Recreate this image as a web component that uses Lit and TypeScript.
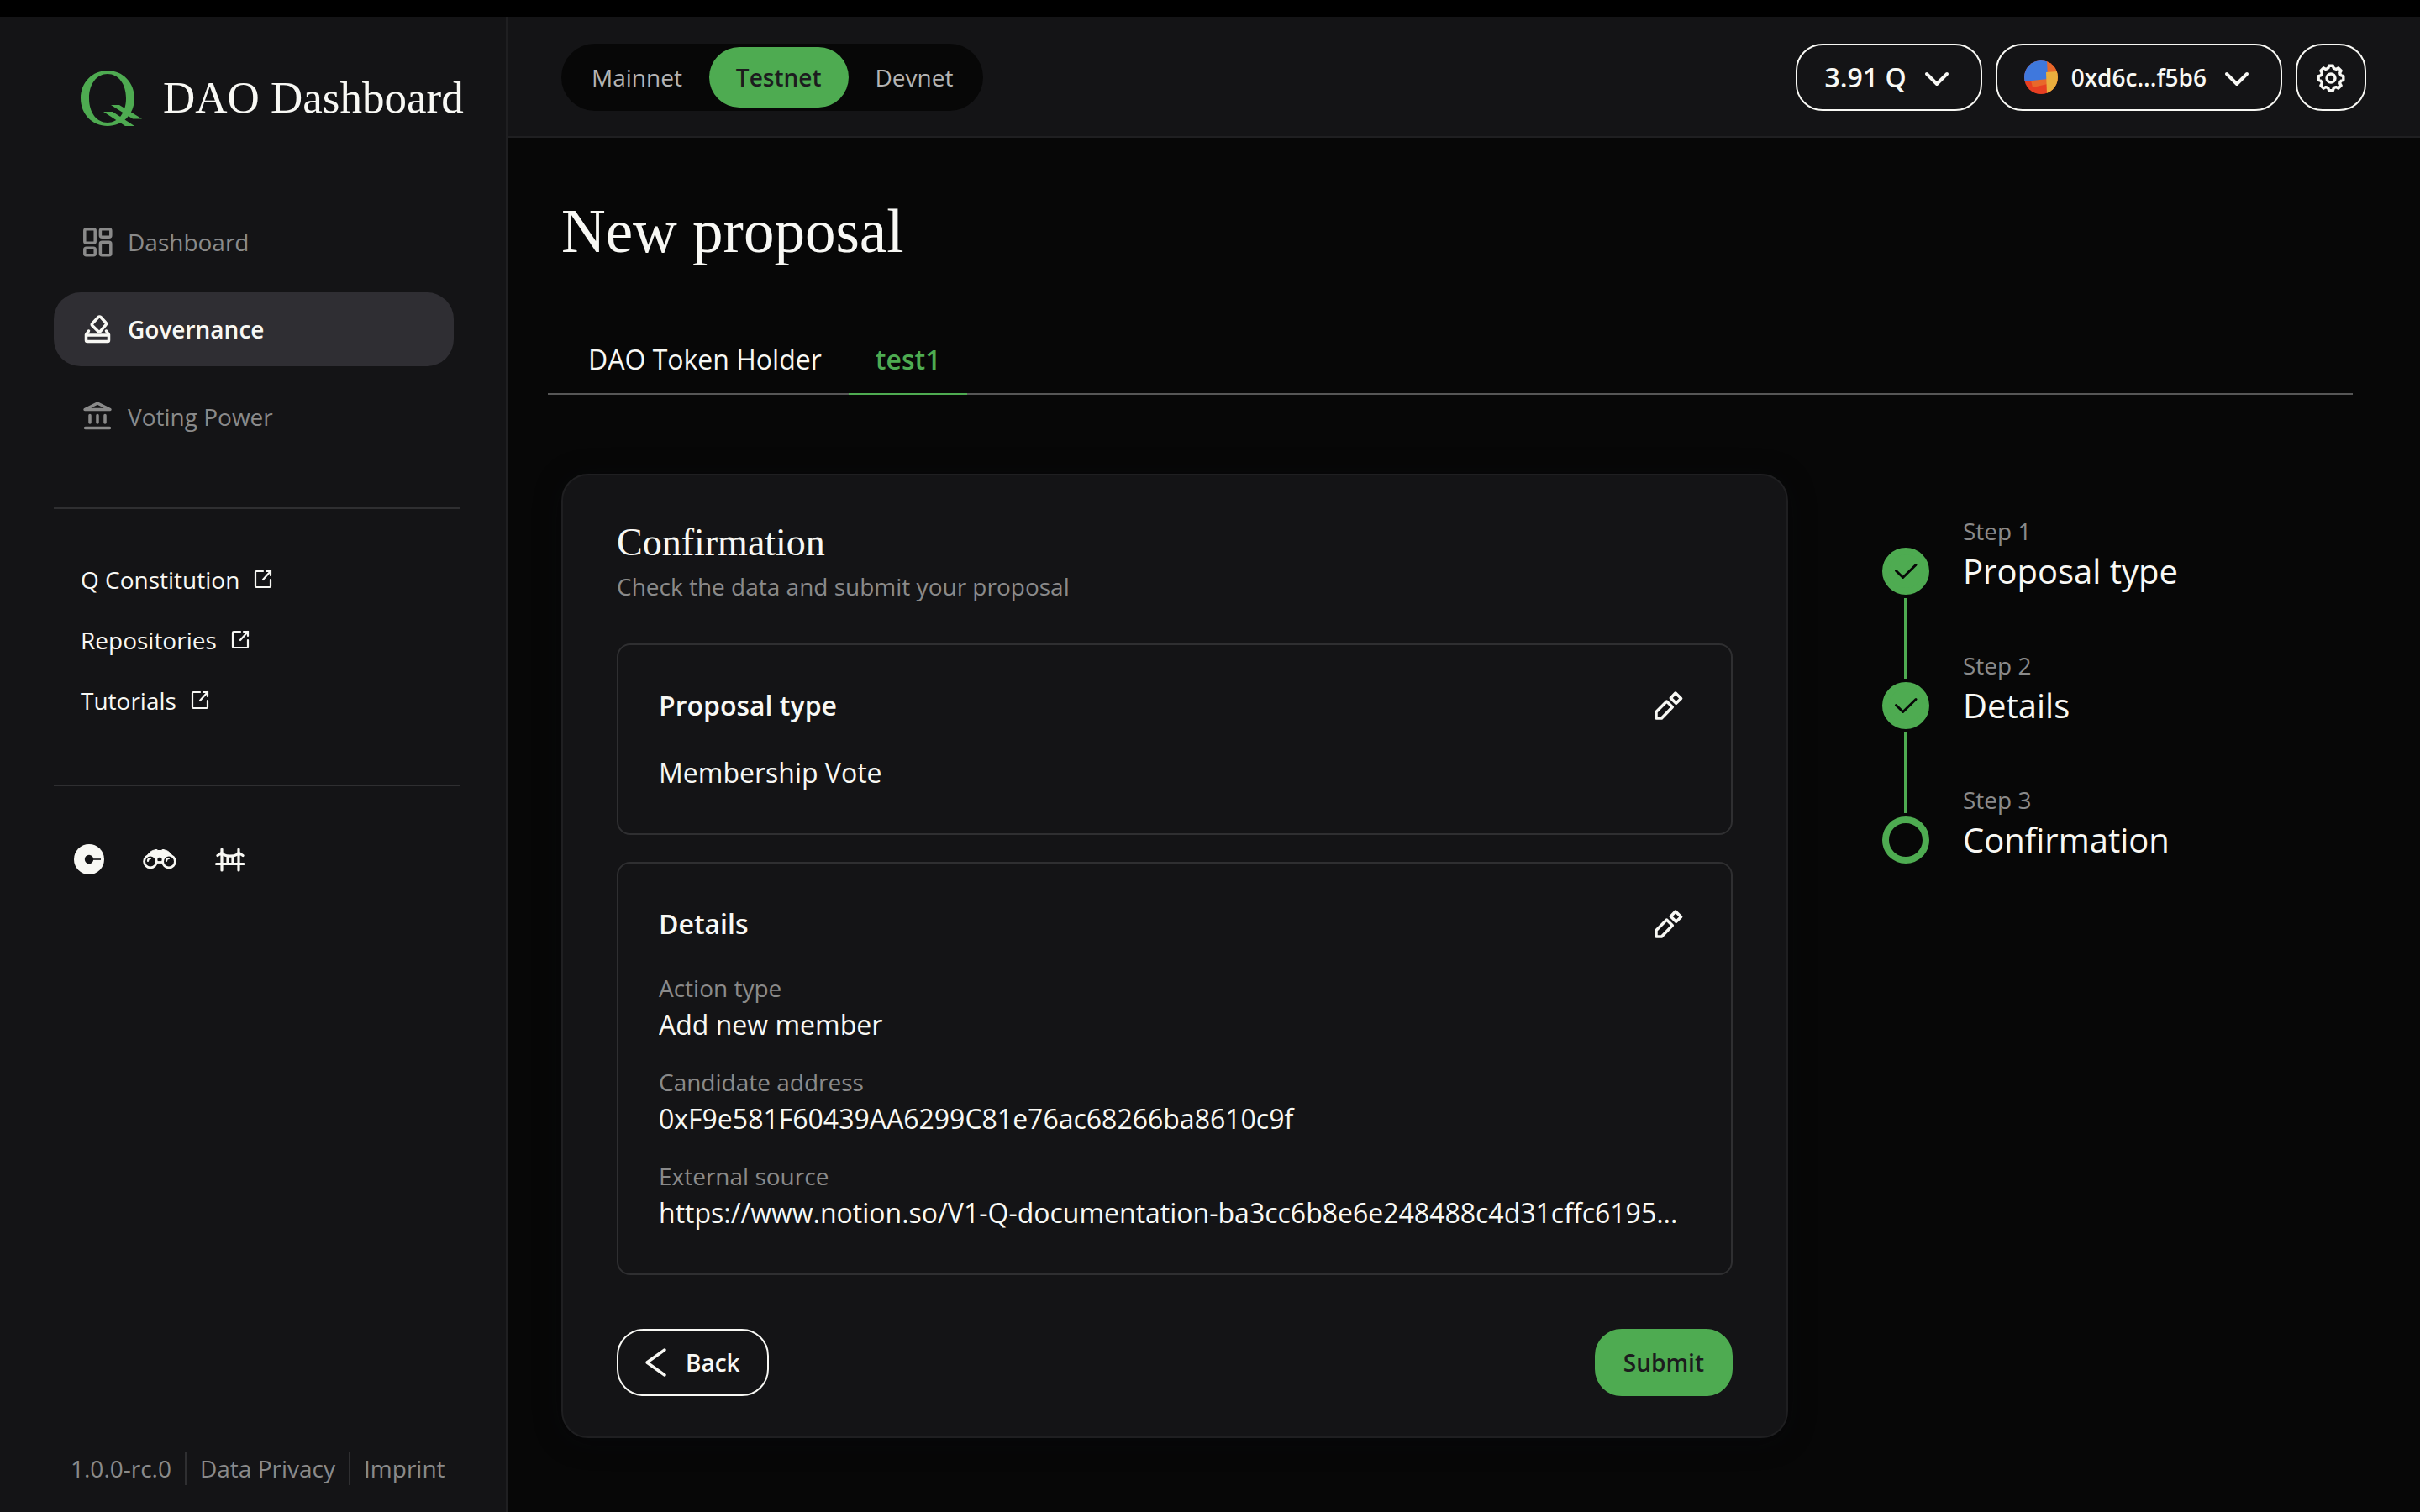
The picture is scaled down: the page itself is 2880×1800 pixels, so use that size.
import { LitElement, html, css, svg, nothing } from "lit";
import { customElement, property, state } from "lit/decorators.js";

const palette = css`
  :host {
    box-sizing: border-box;
    --page: #070707;
    --panel: #141416;
    --panel-line: #1f1f21;
    --line: #2f2f31;
    --selected: #2f2e33;
    --tab-line: #565656;
    --green: #4eab51;
    --text: #f8f8f4;
    --muted: #8a8a8a;
    --ink: #1c1c1e;
    --sans: "Open Sans", "Noto Sans", sans-serif;
    --serif: "Liberation Serif", "Times New Roman", serif;
  }
  * {
    box-sizing: border-box;
  }
  svg {
    display: block;
    flex: none;
  }
  a {
    color: inherit;
    text-decoration: none;
  }
  button {
    font: inherit;
    color: inherit;
    background: none;
    border: 0;
    padding: 0;
    margin: 0;
    cursor: pointer;
  }
  ul,
  ol,
  dl,
  dd,
  h1,
  h2,
  h3,
  p {
    margin: 0;
    padding: 0;
    list-style: none;
    font-weight: 400;
  }
`;

const stroke = (w: number, body: unknown, size = 40) => html`
  <svg width=${size} height=${size} viewBox="0 0 ${size} ${size}" fill="none" stroke="currentColor"
    stroke-width=${w} stroke-linecap="round" stroke-linejoin="round" aria-hidden="true">${body}</svg>`;

/* Outline of a cog with eight blunt teeth, centred on (cx, cy). */
const cog = (cx: number, cy: number) => {
  const at = (deg: number, r: number) => {
    const a = (deg * Math.PI) / 180;
    return `${(cx + r * Math.sin(a)).toFixed(2)} ${(cy - r * Math.cos(a)).toFixed(2)}`;
  };
  let d = "";
  for (let k = 0; k < 8; k++) {
    const c = k * 45;
    d += `${k ? "L" : "M"}${at(c - 9, 15)} L${at(c + 9, 15)} L${at(c + 14, 12.6)} Q${at(c + 22.5, 11.4)} ${at(c + 31, 12.6)} `;
  }
  return d + "Z";
};

const icons: Record<string, () => unknown> = {
  dashboard: () => stroke(3.5, svg`
    <rect x="4.800" y="4.800" width="12.400" height="16.400" rx="2"/>
    <rect x="23.400" y="4.800" width="12.400" height="9.400" rx="2"/>
    <rect x="4.800" y="27.300" width="12.400" height="8.400" rx="2"/>
    <rect x="23.400" y="20.300" width="12.400" height="15.400" rx="2"/>`),
  governance: () => stroke(3.5, svg`
    <path d="M21 5.500 a2 2 0 0 1 2.900 0 L29.800 12 a2 2 0 0 1 0 2.800 L23.500 22.300 a2 2 0 0 1 -2.900 0 L14 15.700 a2 2 0 0 1 0 -2.800 Z"/>
    <path d="M9.500 22 L6.500 26.500 V33 a1.500 1.500 0 0 0 1.500 1.500 H32 a1.500 1.500 0 0 0 1.500 -1.500 V26.500 L30.500 22"/>
    <path d="M7 27 H33"/>`),
  voting: () => stroke(3.5, svg`
    <path d="M5 11.500 L20 4 L35 11.500 Z"/>
    <path d="M11 18.500 V27 M20 18.500 V27 M29 18.500 V27"/>
    <path d="M5.500 33.500 H34.500"/>`),
  chevron: () => stroke(4, svg`<path d="M8 16 L20 28 L32 16"/>`),
  back: () => stroke(3.5, svg`<path d="M31 5 L10 20 L31 35" />`),
  gear: () => stroke(3.4, svg`<circle cx="20" cy="21" r="5"/><path d=${cog(20, 21)}/>`),
  pencil: () => stroke(3.5, svg`
    <path d="M5 35 V27.500 L17.500 15 L24.300 21.800 L11.500 35 Z"/>
    <path d="M22.300 11 L28 5 L34.600 11.500 L28.700 17.300 Z"/>`),
};

@customElement("dao-sidebar")
class DaoSidebar extends LitElement {
  static styles = [palette, css`
    :host {
      display: flex;
      flex-direction: column;
      background: var(--panel);
      border-right: 2px solid var(--panel-line);
      padding: 64px 54px 32px 64px;
      color: var(--text);
      font: 400 28px/40px var(--sans);
    }
    .brand {
      display: flex;
      gap: 24px;
      height: 68px;
      padding-left: 32px;
      font: 400 53px/64px var(--serif);
      white-space: nowrap;
    }
    .nav {
      display: grid;
      gap: 16px;
      margin: 92px 8px 64px 0;
    }
    .nav a {
      display: flex;
      align-items: center;
      gap: 16px;
      height: 88px;
      padding: 0 32px;
      border-radius: 32px;
      color: var(--muted);
    }
    .nav a.on {
      background: var(--selected);
      color: var(--text);
      font-weight: 600;
    }
    .links {
      display: grid;
      gap: 32px;
      border-top: 2px solid var(--line);
      border-bottom: 2px solid var(--line);
      padding: 64px 32px 80px;
    }
    .links a {
      display: flex;
      align-items: center;
      gap: 16px;
    }
    .social {
      display: flex;
      gap: 44px;
      padding: 68px 22px;
    }
    .foot {
      display: flex;
      margin-top: auto;
      padding-left: 20px;
      color: var(--muted);
    }
    .foot > * + * {
      border-left: 2px solid var(--line);
      margin-left: 16px;
      padding-left: 16px;
    }
  `];

  @state() items = [
    { icon: "dashboard", label: "Dashboard" },
    { icon: "governance", label: "Governance", on: true },
    { icon: "voting", label: "Voting Power" },
  ];

  render() {
    return html`
      <a class="brand" href="#">
        <svg width="74" height="68" viewBox="0 0 74 68" fill="#4eab51" aria-hidden="true">
          <path fill-rule="evenodd" d="M32 0 C50 0 64 14 64 33 C64 52 50 66 32 66 C14 66 0 52 0 33 C0 14 14 0 32 0 Z M32 4 C19 4 10 16 10 33 C10 50 19 62 32 62 C45 62 54 50 54 33 C54 16 45 4 32 4 Z"/>
          <path d="M36 41 H46 L73 57.500 H62 Z M27 49 H38 L64 66 H53 Z"/>
        </svg>
        <span>DAO Dashboard</span>
      </a>
      <nav class="nav">
        ${this.items.map((i) => html`<a href="#" class=${i.on ? "on" : ""}>${icons[i.icon]()}<span>${i.label}</span></a>`)}
      </nav>
      <div class="links">
        ${["Q Constitution", "Repositories", "Tutorials"].map((l) => html`
          <a href="#"><span>${l}</span>
            <svg width="26" height="26" viewBox="0 0 26 26" fill="none" stroke="currentColor" stroke-width="2.200" stroke-linecap="round" aria-hidden="true">
              <path d="M12 3 H4 a1 1 0 0 0 -1 1 V21 a1 1 0 0 0 1 1 H20 a1 1 0 0 0 1 -1 V13 M16 3 H21 V8 M21 3 L12 13"/>
            </svg></a>`)}
      </div>
      <div class="social">
        <a href="#" aria-label="Coingecko">
          <svg width="40" height="38" viewBox="0 0 40 38"><circle cx="20" cy="19" r="18" fill="#f8f8f4"/><circle cx="20" cy="19" r="5.200" fill="#141416"/><path d="M20 19 H34" stroke="#141416" stroke-width="1.600"/></svg>
        </a>
        <a href="#" aria-label="Explorer">
          <svg width="40" height="38" viewBox="0 0 40 38" fill="none" stroke="#f8f8f4" stroke-width="2.800" aria-hidden="true">
            <path d="M5 15 C8 10 11 8.500 14 8 Q16 6.500 18 8.500 H22 Q24 6.500 26 8 C29 8.500 32 10 35 15 L27 19 H24 L20 16 L16 19 H13 Z" fill="#f8f8f4" stroke-width="1"/>
            <circle cx="9" cy="21.500" r="7.400" fill="#141416"/><circle cx="31" cy="21.500" r="7.400" fill="#141416"/>
            <path d="M16 22.500 H24"/>
            <circle cx="20" cy="18.500" r="1.800" fill="#141416" stroke="none"/>
            <path d="M6 21 a3 3 0 0 1 3 -3 M28 21 a3 3 0 0 1 3 -3" stroke-width="2.200" stroke-linecap="round"/>
          </svg>
        </a>
        <a href="#" aria-label="Bridge">
          <svg width="38" height="38" viewBox="0 0 38 38" fill="none" stroke="#f8f8f4" stroke-width="3.200" stroke-linecap="round" aria-hidden="true">
            <path d="M3.500 24.500 H36 M10 7 V32 M30 7 V32 M5 14.500 L10 11 C13 16.500 27 16.500 30 11 L35 14.500 M17 16 V24 M23 16 V24"/>
          </svg>
        </a>
      </div>
      <footer class="foot"><span>1.0.0-rc.0</span><a href="#">Data Privacy</a><a href="#">Imprint</a></footer>
    `;
  }
}

@customElement("dao-header")
class DaoHeader extends LitElement {
  static styles = [palette, css`
    :host {
      display: flex;
      justify-content: space-between;
      align-items: center;
      background: var(--panel);
      border-bottom: 2px solid var(--panel-line);
      padding: 32px 64px 30px;
      color: var(--text);
      font: 400 28px/40px var(--sans);
    }
    .nets {
      display: flex;
      padding: 4px;
      border-radius: 40px;
      background: var(--page);
    }
    .net {
      height: 72px;
      padding: 0 32px;
      border-radius: 36px;
      color: #b4b4b4;
    }
    .net.on {
      background: var(--green);
      color: var(--ink);
      font-weight: 600;
    }
    .tools {
      display: flex;
      gap: 16px;
    }
    .tool {
      display: flex;
      align-items: center;
      gap: 16px;
      height: 80px;
      padding: 0 32px;
      border: 2px solid var(--text);
      border-radius: 32px;
      font-weight: 600;
    }
    .balance {
      font-size: 32px;
    }
    .gear {
      padding: 0 20px;
    }
  `];

  @state() net = "Testnet";

  render() {
    return html`
      <div class="nets" role="group" aria-label="Network">
        ${["Mainnet", "Testnet", "Devnet"].map((n) => html`
          <button class="net ${n === this.net ? "on" : ""}" aria-pressed=${n === this.net}
            @click=${() => (this.net = n)}>${n}</button>`)}
      </div>
      <div class="tools">
        <button class="tool balance">3.91 Q ${icons.chevron()}</button>
        <button class="tool">
          <svg width="40" height="40" viewBox="0 0 40 40" aria-hidden="true">
            <clipPath id="disc"><circle cx="20" cy="20" r="20"/></clipPath>
            <g clip-path="url(#disc)">
              <rect width="40" height="40" fill="#e73f22"/>
              <path d="M26 0 H40 V14 L27 15 Z" fill="#e8682a"/>
              <path d="M8 24 L27 20 L28 28 L10 32 Z" fill="#e8682a"/>
              <path d="M0 0 H27 L28 22 L0 25 Z" fill="#3f78dd"/>
              <path d="M26 14 L40 13 V40 H27 Z" fill="#eaae3d"/>
            </g>
          </svg>
          0xd6c...f5b6 ${icons.chevron()}
        </button>
        <button class="tool gear" aria-label="Settings">${icons.gear()}</button>
      </div>
    `;
  }
}

@customElement("dao-review-box")
class DaoReviewBox extends LitElement {
  static styles = [palette, css`
    :host {
      display: grid;
      gap: 32px;
      border: 2px solid var(--line);
      border-radius: 16px;
      padding: 48px;
      font: 400 32px/48px var(--sans);
    }
    .top {
      display: flex;
      justify-content: space-between;
      align-items: center;
      padding-right: 6px;
    }
    .heading {
      font-size: 32px;
      font-weight: 600;
    }
    .fields {
      display: grid;
      gap: 24px;
      min-width: 0;
    }
    .label {
      font-size: 28px;
      line-height: 40px;
      color: var(--muted);
    }
    .value {
      overflow: hidden;
      text-overflow: ellipsis;
      white-space: nowrap;
    }
  `];

  @property() heading = "";
  @property({ attribute: false }) fields: { label?: string; value: string }[] = [];

  render() {
    return html`
      <div class="top">
        <h3 class="heading">${this.heading}</h3>
        <button aria-label="Edit ${this.heading}">${icons.pencil()}</button>
      </div>
      <dl class="fields">
        ${this.fields.map((f) => html`<div>
          ${f.label ? html`<dt class="label">${f.label}</dt>` : nothing}
          <dd class="value">${f.value}</dd>
        </div>`)}
      </dl>
    `;
  }
}

@customElement("dao-steps")
class DaoSteps extends LitElement {
  static styles = [palette, css`
    :host {
      display: flex;
      gap: 40px;
      padding-top: 48px;
      font: 400 28px/40px var(--sans);
    }
    .rail {
      display: flex;
      flex-direction: column;
      align-items: center;
      gap: 4px;
      padding-top: 40px;
    }
    .dot {
      display: grid;
      place-items: center;
      width: 56px;
      height: 56px;
      border-radius: 50%;
      border: 8px solid var(--green);
      color: var(--page);
    }
    .dot.done {
      background: var(--green);
    }
    .bar {
      width: 4px;
      height: 96px;
      background: var(--green);
    }
    .names {
      display: grid;
      gap: 64px;
      align-content: start;
    }
    .num {
      color: var(--muted);
    }
    .name {
      font-size: 40px;
      line-height: 56px;
    }
  `];

  @state() steps = ["Proposal type", "Details", "Confirmation"];

  render() {
    const last = this.steps.length - 1;
    return html`
      <div class="rail" aria-hidden="true">
        ${this.steps.map((_, i) => html`
          <span class="dot ${i < last ? "done" : ""}">
            ${i < last ? stroke(3, svg`<path d="M8.500 19.500 L16.700 27.500 L32 12.500"/>`) : nothing}
          </span>
          ${i < last ? html`<span class="bar"></span>` : nothing}`)}
      </div>
      <ol class="names">
        ${this.steps.map((s, i) => html`<li><p class="num">Step ${i + 1}</p><p class="name">${s}</p></li>`)}
      </ol>
    `;
  }
}

@customElement("app-root")
class AppRoot extends LitElement {
  static styles = [palette, css`
    :host {
      display: grid;
      grid-template-columns: 604px minmax(0, 1fr);
      grid-template-rows: auto 1fr;
      min-height: 100vh;
      border-top: 20px solid #000;
      background: var(--page);
      color: var(--text);
      font: 400 28px/40px var(--sans);
    }
    .side {
      grid-row: 1 / 3;
    }
    .main {
      padding: 64px 80px 64px 64px;
    }
    .title {
      font: 400 73px/96px var(--serif);
    }
    .tabs {
      display: flex;
      margin: 64px 0 94px -16px;
      padding-left: 16px;
      border-bottom: 2px solid var(--tab-line);
      font-size: 32px;
      line-height: 48px;
    }
    .tab {
      margin-bottom: -2px;
      padding: 16px 32px;
      border-bottom: 2px solid transparent;
    }
    .tab.on {
      border-color: var(--green);
      color: var(--green);
      font-weight: 600;
    }
    .cols {
      display: grid;
      grid-template-columns: minmax(0, 1fr) 560px;
      gap: 112px;
      align-items: start;
    }
    .card {
      display: grid;
      grid-template-columns: minmax(0, 1fr);
      gap: 32px;
      padding: 48px 64px;
      background: var(--panel);
      border: 2px solid var(--panel-line);
      border-radius: 32px;
      box-shadow: 0 4px 32px rgba(8, 10, 16, 0.4);
    }
    .lead {
      padding-bottom: 16px;
      color: var(--muted);
    }
    .subtitle {
      font: 400 46px/64px var(--serif);
      color: var(--text);
    }
    .actions {
      display: flex;
      justify-content: space-between;
      padding-top: 32px;
      font-weight: 600;
    }
    .back {
      display: flex;
      align-items: center;
      gap: 16px;
      height: 80px;
      padding: 0 32px 0 24px;
      border: 2px solid var(--text);
      border-radius: 32px;
    }
    .submit {
      height: 80px;
      padding: 0 32px;
      border: 2px solid var(--green);
      border-radius: 32px;
      background: var(--green);
      color: var(--ink);
    }
  `];

  @state() tab = "test1";

  details = [
    { label: "Action type", value: "Add new member" },
    { label: "Candidate address", value: "0xF9e581F60439AA6299C81e76ac68266ba8610c9f" },
    { label: "External source", value: "https://www.notion.so/V1-Q-documentation-ba3cc6b8e6e248488c4d31cffc6195..." },
  ];

  render() {
    return html`
      <dao-sidebar class="side"></dao-sidebar>
      <dao-header></dao-header>
      <main class="main">
        <h1 class="title">New proposal</h1>
        <div class="tabs" role="tablist">
          ${["DAO Token Holder", "test1"].map((t) => html`
            <button class="tab ${t === this.tab ? "on" : ""}" role="tab" aria-selected=${t === this.tab}
              @click=${() => (this.tab = t)}>${t}</button>`)}
        </div>
        <div class="cols">
          <section class="card">
            <div class="lead">
              <h2 class="subtitle">Confirmation</h2>
              <p>Check the data and submit your proposal</p>
            </div>
            <dao-review-box heading="Proposal type" .fields=${[{ value: "Membership Vote" }]}></dao-review-box>
            <dao-review-box heading="Details" .fields=${this.details}></dao-review-box>
            <div class="actions">
              <button class="back">${icons.back()}Back</button>
              <button class="submit">Submit</button>
            </div>
          </section>
          <dao-steps></dao-steps>
        </div>
      </main>
    `;
  }
}
